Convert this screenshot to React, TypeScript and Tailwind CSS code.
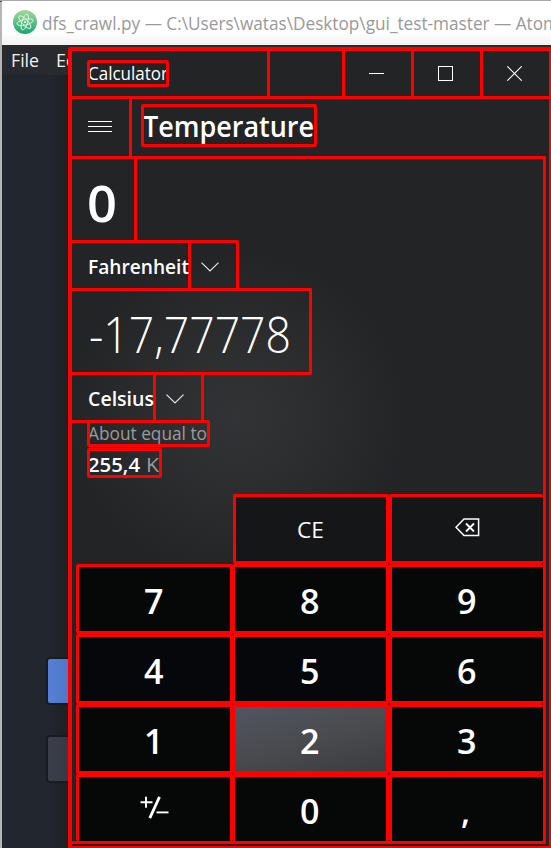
import { useLayoutEffect, useRef, useState, type ReactNode } from "react";
import { clsx } from "clsx";

/** Single line of text stretched horizontally to an exact width. */
function Fit({ w, className, children }: { w: number; className?: string; children: ReactNode }) {
  const ref = useRef<HTMLSpanElement>(null);
  const [scale, setScale] = useState(1);
  useLayoutEffect(() => {
    const natural = ref.current?.getBoundingClientRect().width;
    if (natural) setScale((s) => (w / natural) * s);
  }, [w]);
  return (
    <span className={clsx("block shrink-0 whitespace-pre", className)} style={{ width: w }}>
      <span ref={ref} className="inline-block origin-left" style={{ transform: `scaleX(${scale})` }}>
        {children}
      </span>
    </span>
  );
}

const frame =
  "relative after:absolute after:inset-0 after:rounded-[2px] after:border-[3px] after:border-[#ff0000] after:content-['']";

function Chevron() {
  return (
    <svg width="18" height="10" viewBox="0 0 18 10" fill="none" stroke="#e8e8e8" strokeWidth="1.2">
      <path d="M.5.6 9 9 17.5.6" />
    </svg>
  );
}

function Key({ children, className }: { children: ReactNode; className?: string }) {
  return (
    <div
      className={clsx(
        "flex shrink-0 items-center justify-center rounded-[2px] border-t-[3px] border-l-[3px] border-[#ff0000]",
        className,
      )}
    >
      {children}
    </div>
  );
}

const dark = "bg-[#060707]";

function Keypad() {
  const rows = [
    ["7", "8", "9"],
    ["4", "5", "6"],
    ["1", "2", "3"],
    ["±", "0", ","],
  ];
  return (
    <div className="mt-4 ml-1">
      <div className="flex pl-[157px]">
        <Key className="h-[70px] w-[156px] border-r-[3px] border-b-[3px] bg-[#151618]">
          <Fit w={27} className="mr-[2px] text-[22px] leading-[64px]">
            CE
          </Fit>
        </Key>
        <Key className="h-[70px] w-[154px] border-b-[3px] bg-[#151618]">
          <svg
            className="mr-px mb-[3px]"
            width="25"
            height="19"
            viewBox="0 0 25 19"
            fill="none"
            stroke="white"
            strokeWidth="1.5"
          >
            <path d="M9 1h14.6v16.6H9L1 9.3z" />
            <path d="m11 5.5 8 8m0-8-8 8" strokeWidth="1.8" />
          </svg>
        </Key>
      </div>
      {rows.map((row, r) => (
        <div key={r} className="flex">
          {row.map((k, c) => (
            <Key
              key={k}
              className={clsx(
                c === 0 && "w-[157px] border-r-[3px]",
                c === 1 && "-ml-px w-[157px] border-r-[3px]",
                c === 2 && "w-[154px]",
                r === 3 ? "h-[67px]" : "h-[70px] border-b-[3px]",
                k === "2"
                  ? "bg-[linear-gradient(165deg,#50545f_5%,#4a4b4f_50%,#3d3e40_95%)]"
                  : r === 1 && c < 2
                    ? "bg-[#06070b]"
                    : dark,
              )}
            >
              {k === "±" ? (
                <svg
                  className="mr-px mb-[3px]"
                  width="29"
                  height="23"
                  viewBox="0 0 29 23"
                  fill="none"
                  stroke="white"
                >
                  <path d="M.5 6.2h12M6 .8v11" strokeWidth="1.9" />
                  <path d="M19.5.8 9.8 22.2" strokeWidth="2.8" />
                  <path d="M16.5 16.4h12" strokeWidth="1.9" />
                </svg>
              ) : k === "," ? (
                <Fit w={9} className="mr-[4px] pt-[3px] text-[35px] leading-[61px] font-semibold">
                  ,
                </Fit>
              ) : (
                <Fit w={19.5} className="mr-[2px] pt-[3px] text-[35px] leading-[61px] font-semibold">
                  {k}
                </Fit>
              )}
            </Key>
          ))}
        </div>
      ))}
    </div>
  );
}

function Calculator() {
  return (
    <div className="absolute top-[47px] left-[68px] h-[802px] w-[484px] rounded-[2px] border-4 border-r-[3px] border-b-[3px] border-[#ff0000] bg-[#222426] bg-[radial-gradient(ellipse_170px_165px_at_165px_365px,#323335_0%,#2c2e30_40%,#222426_100%)] text-white">
      <div className="flex h-12 border-b-[3px] border-[#ff0000]">
        <div className="w-[198px] border-r-[3px] border-[#ff0000] pt-[9px] pl-[15px]">
          <div className={clsx(frame, "h-[27px] w-[82px] pl-px")}>
            <Fit w={80} className="text-[18px] leading-[26px]">
              Calculator
            </Fit>
          </div>
        </div>
        <div className="w-[75px] border-r-[3px] border-[#ff0000]" />
        <div className="flex w-[69px] items-center justify-center border-r-[3px] border-[#ff0000] pr-[3px]">
          <div className="h-px w-[15px] bg-white" />
        </div>
        <div className="flex w-[69px] items-center justify-center border-r-[3px] border-[#ff0000] pr-[3px]">
          <div className="size-[15px] border border-white" />
        </div>
        <div className="flex flex-1 items-center justify-center pr-[3px]">
          <svg width="15" height="15" viewBox="0 0 15 15" stroke="white" strokeWidth="1.1">
            <path d="m.3.3 14.4 14.4m0-14.4L.3 14.7" />
          </svg>
        </div>
      </div>

      <div className="flex h-[57px]">
        <div className="flex w-[60px] flex-col items-center gap-1 border-r-[3px] border-[#ff0000] pt-[22px] pr-px">
          <div className="h-px w-6 bg-white" />
          <div className="h-px w-6 bg-white" />
          <div className="h-px w-6 bg-white" />
        </div>
        <div className={clsx(frame, "mt-[5px] ml-[9px] h-[43px] w-[176px] pl-[2px]")}>
          <Fit w={171} className="text-[28px] leading-[45px] font-semibold">
            Temperature
          </Fit>
        </div>
      </div>

      <div className="h-[688px] w-[474px] rounded-r-[2px] border-y-[3px] border-r-[3px] border-[#ff0000]">
        <div className="h-[81px] w-[65px] border-r-[3px] border-[#ff0000] pl-[15px]">
          <Fit w={30} className="text-[51px] leading-[86px] font-semibold">
            0
          </Fit>
        </div>
        <div className="flex h-12 w-[167px] rounded-tr-[2px] border-t-[3px] border-r-[3px] border-[#ff0000]">
          <div className="w-[119px] border-r-[3px] border-[#ff0000] pl-[16px]">
            <Fit w={101} className="text-[20px] leading-[47px] font-semibold">
              Fahrenheit
            </Fit>
          </div>
          <div className="pt-[19px] pl-[10px]">
            <Chevron />
          </div>
        </div>
        <div className="h-[87px] w-60 rounded-r-[2px] border-y-[3px] border-r-[3px] border-[#ff0000] pl-[17px]">
          <Fit w={202} className="text-[50px] leading-[87px] font-light">
            -17,77778
          </Fit>
        </div>
        <div className="flex h-12 w-[132px] border-r-[3px] border-b-[3px] border-[#ff0000]">
          <div className="w-[84px] border-r-[3px] border-[#ff0000] pl-[16px]">
            <Fit w={66} className="text-[20px] leading-[47px] font-semibold">
              Celsius
            </Fit>
          </div>
          <div className="pt-[19px] pl-[10px]">
            <Chevron />
          </div>
        </div>
        <div className={clsx(frame, "-mt-[3px] ml-[15px] h-[27px] w-[123px] pl-px")}>
          <Fit w={119} className="text-[18px] leading-[26px] text-[#9b9c9d]">
            About equal to
          </Fit>
        </div>
        <div className={clsx(frame, "mt-px ml-[15px] flex h-[30px] w-[75px] pl-px")}>
          <Fit w={52} className="text-[20px] leading-[33px] font-semibold">
            255,4
          </Fit>
          <Fit w={13} className="ml-[6px] text-[20px] leading-[33px] text-[#9b9c9d]">
            K
          </Fit>
        </div>
        <Keypad />
      </div>
    </div>
  );
}

function AtomLogo() {
  return (
    <svg className="shrink-0" width="24" height="24" viewBox="0 0 24 24" fill="none">
      <defs>
        <linearGradient id="atom" x1="0" y1="0" x2="0" y2="1">
          <stop stopColor="#a5d99a" />
          <stop offset="1" stopColor="#18a66f" />
        </linearGradient>
      </defs>
      <circle cx="12" cy="12" r="12" fill="url(#atom)" />
      <g stroke="#e8f7ec" strokeWidth="0.9">
        <ellipse cx="12" cy="12.2" rx="8.3" ry="2.9" transform="rotate(-13 12 12)" />
        <ellipse cx="12" cy="12.2" rx="8.3" ry="2.9" transform="rotate(47 12 12)" />
        <ellipse cx="12" cy="12.2" rx="8.3" ry="2.9" transform="rotate(107 12 12)" />
      </g>
      <circle cx="12" cy="12.2" r="1.1" fill="#e8f7ec" />
    </svg>
  );
}

export default function App() {
  return (
    <div className="relative h-[848px] w-[551px] overflow-hidden border-t border-[#a9a9a9] bg-[#22262f] font-['Open_Sans','Noto_Sans',sans-serif]">
      <div className="flex h-full">
        <div className="w-[2px] shrink-0 bg-[#b5b5b5]" />
        <div className="flex min-w-0 flex-1 flex-col">
          <div className="flex h-11 shrink-0 overflow-hidden bg-linear-to-b from-white from-70% to-[#f2f2f2] pt-[9px] pl-[11px]">
            <AtomLogo />
            <Fit w={517} className="ml-[5px] text-[18px] leading-[26px] text-[#999999]">
              dfs_crawl.py — C:\Users\watas\Desktop\gui_test-master — Atom
            </Fit>
          </div>
          <div className="flex h-[30px] shrink-0 bg-[#282a2f] pl-[9px] text-[#f0f0f0]">
            <Fit w={28} className="text-[17.5px] leading-[30px]">
              File
            </Fit>
            <Fit w={32} className="ml-[17px] text-[17.5px] leading-[30px]">
              Edit
            </Fit>
          </div>
          <div className="flex-1 bg-linear-to-r from-[#22262f] from-[45px] to-[#1d2022] to-[68px] pt-[582px] pl-[44px]">
            <div className="h-[48px] w-20 rounded-[4px] border-2 border-[#191b20] bg-linear-to-r from-[#5680d5] to-[#3c62ae]" />
            <div className="mt-[30px] h-[48px] w-20 rounded-[4px] border-2 border-[#191b20] bg-linear-to-r from-[#3b3f4a] to-[#292b32]" />
          </div>
        </div>
      </div>
      <div className="absolute -top-px left-0 size-[2px] bg-[#ff0000]" />
      <div className="absolute -top-px left-0">
        <Calculator />
      </div>
    </div>
  );
}
